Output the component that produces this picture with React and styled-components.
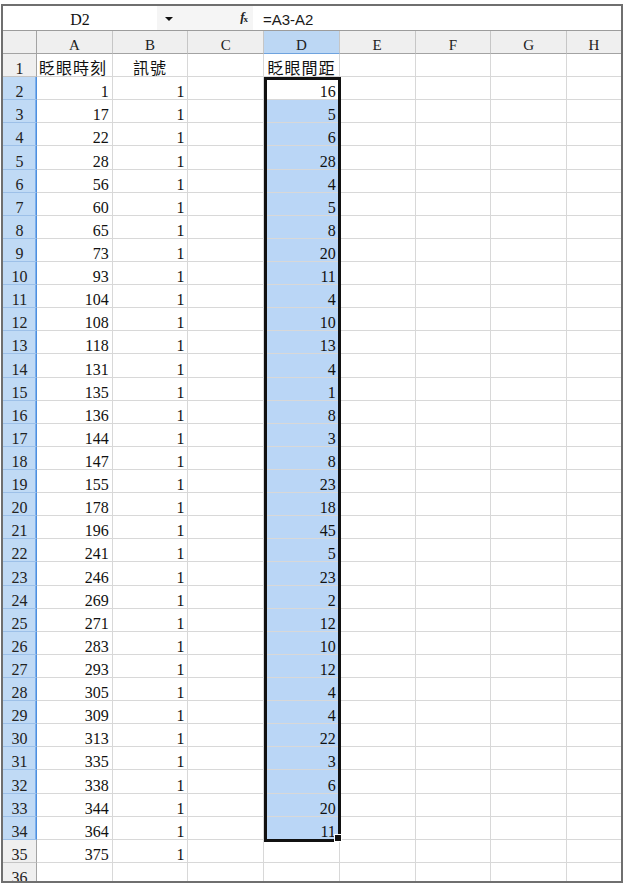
import React from "react";
import styled, { createGlobalStyle } from "styled-components";

const ROW_HEAD_W = 34;
const COL_W = 75.71;
const HEAD_H = 23;
const ROW_H = 23.12;

const SERIF = `"Liberation Serif", "Noto Sans CJK TC", serif`;

const GlobalStyle = createGlobalStyle`
  html, body { margin: 0; padding: 0; background: #fff; }
  body { font-family: ${SERIF}; color: #111; }
  * { box-sizing: border-box; }
`;

const Frame = styled.div`
  width: 622px;
  height: 879px;
  margin: 4px 0 0 1px;
  border: 2px solid #6f6f6f;
  display: flex;
  flex-direction: column;
  overflow: hidden;
  background: #fff;
`;

const FormulaBar = styled.div`
  height: 25px;
  flex: none;
  display: flex;
  border-bottom: 1px solid #9c9c9c;
`;

const NameBox = styled.div`
  width: 154px;
  display: flex;
  align-items: flex-end;
  justify-content: center;
  padding-bottom: 3px;
  font: 16px/14px ${SERIF};
  background: #fff;
`;

const ToolArea = styled.div`
  width: 96px;
  display: flex;
  align-items: center;
  justify-content: space-between;
  padding: 0 6px 0 8px;
  background: #f5f5f5;
`;

const DropArrow = styled.span`
  width: 0;
  height: 0;
  margin-top: 2px;
  border-left: 4px solid transparent;
  border-right: 4px solid transparent;
  border-top: 4px solid #111;
`;

const FxLabel = styled.span`
  font: italic bold 13px/1 ${SERIF};
  color: #222;
  letter-spacing: -1px;
  margin-top: -2px;
  & > small {
    font-size: 9px;
    font-style: normal;
    vertical-align: -1px;
  }
`;

const FormulaInput = styled.div`
  flex: 1;
  display: flex;
  align-items: flex-end;
  padding: 0 0 3px 10px;
  font: 15px/14px "Liberation Sans", Arial, sans-serif;
  color: #1a1a1a;
  background: #fff;
`;

const Sheet = styled.div`
  position: relative;
  flex: 1;
  display: grid;
  grid-template-columns: ${ROW_HEAD_W}px repeat(7, ${COL_W}px) 1fr;
  grid-template-rows: ${HEAD_H}px;
  grid-auto-rows: ${ROW_H}px;
  overflow: hidden;
`;

const Corner = styled.div`
  background: #efefef;
  border-right: 1px solid #a3a3a3;
  border-bottom: 1px solid #a3a3a3;
`;

const ColHead = styled.div`
  display: flex;
  align-items: flex-end;
  justify-content: center;
  padding-bottom: 1px;
  font: 15px/14px ${SERIF};
  color: #222;
  background: ${(p) => (p.$selected ? "#bcd7f4" : "#efefef")};
  border-right: ${(p) => (p.$last ? "none" : "1px solid #c6c6c6")};
  border-bottom: 1px solid ${(p) => (p.$selected ? "#6fa3de" : "#a3a3a3")};
`;

const RowHead = styled.div`
  display: flex;
  align-items: flex-end;
  justify-content: center;
  font: 16px/14px ${SERIF};
  color: #222;
  background: ${(p) => (p.$selected ? "#c0daf5" : "#efefef")};
  border-right: 1px solid ${(p) => (p.$selected ? "#4c8fe0" : "#a3a3a3")};
  border-bottom: 1px solid ${(p) => (p.$selected ? "#9dc0e8" : "#c4c4c4")};
  box-shadow: ${(p) => (p.$selected ? "inset -1px 0 0 #7fb0ea" : "none")};
`;

const Cell = styled.div`
  display: flex;
  align-items: flex-end;
  justify-content: ${(p) => p.$align || "flex-end"};
  padding: 0 ${(p) => (p.$align === "flex-start" ? "2px" : "3px")};
  font: 16px/14px ${SERIF};
  letter-spacing: ${(p) => (p.$wide ? "1px" : "0")};
  white-space: nowrap;
  color: #111;
  background: ${(p) => (p.$selected ? "#bad6f6" : "#fff")};
  border-right: ${(p) => (p.$last ? "none" : "1px solid #d8d8d8")};
  border-bottom: 1px solid #d8d8d8;
`;

// thick outline around D2:D34 with the fill handle at its corner
const Selection = styled.div`
  position: absolute;
  left: ${ROW_HEAD_W + 3 * COL_W - 0.5}px;
  top: ${HEAD_H + ROW_H - 0.5}px;
  width: ${COL_W + 1.5}px;
  height: ${33 * ROW_H + 2}px;
  border: 3px solid #111;
  pointer-events: none;
  &::after {
    content: "";
    position: absolute;
    right: -4px;
    bottom: -3px;
    width: 6px;
    height: 6px;
    background: #111;
    border: 1px solid #fff;
  }
`;

const COLS = ["A", "B", "C", "D", "E", "F", "G", "H"];

const times = [
  1, 17, 22, 28, 56, 60, 65, 73, 93, 104, 108, 118, 131, 135, 136, 144, 147,
  155, 178, 196, 241, 246, 269, 271, 283, 293, 305, 309, 313, 335, 338, 344,
  364, 375,
];

const gaps = [
  16, 5, 6, 28, 4, 5, 8, 20, 11, 4, 10, 13, 4, 1, 8, 3, 8, 23, 18, 45, 5, 23,
  2, 12, 10, 12, 4, 4, 22, 3, 6, 20, 11,
];

function rowValues(r) {
  if (r === 1) {
    return [
      { v: "眨眼時刻", align: "flex-start", wide: true },
      { v: "訊號", align: "center", wide: true },
      { v: "" },
      { v: "眨眼間距", align: "center", wide: true },
    ];
  }
  const i = r - 2;
  return [
    { v: times[i] ?? "" },
    { v: times[i] !== undefined ? 1 : "" },
    { v: "" },
    { v: gaps[i] ?? "" },
  ];
}

export default function App() {
  const rows = Array.from({ length: 36 }, (_, k) => k + 1);
  const isSelRow = (r) => r >= 2 && r <= 34;

  return (
    <>
      <GlobalStyle />
      <Frame>
        <FormulaBar>
          <NameBox>D2</NameBox>
          <ToolArea>
            <DropArrow />
            <FxLabel>
              f<small>x</small>
            </FxLabel>
          </ToolArea>
          <FormulaInput>=A3-A2</FormulaInput>
        </FormulaBar>
        <Sheet>
          <Corner />
          {COLS.map((c, ci) => (
            <ColHead key={c} $selected={c === "D"} $last={ci === COLS.length - 1}>
              {c}
            </ColHead>
          ))}
          {rows.map((r) => {
            const vals = rowValues(r);
            return (
              <React.Fragment key={r}>
                <RowHead $selected={isSelRow(r)}>{r}</RowHead>
                {COLS.map((c, ci) => {
                  const cell = vals[ci] || { v: "" };
                  return (
                    <Cell
                      key={c}
                      $align={cell.align}
                      $wide={cell.wide}
                      $selected={c === "D" && r >= 3 && r <= 34}
                      $last={ci === COLS.length - 1}
                    >
                      {cell.v}
                    </Cell>
                  );
                })}
              </React.Fragment>
            );
          })}
          <Selection />
        </Sheet>
      </Frame>
    </>
  );
}
